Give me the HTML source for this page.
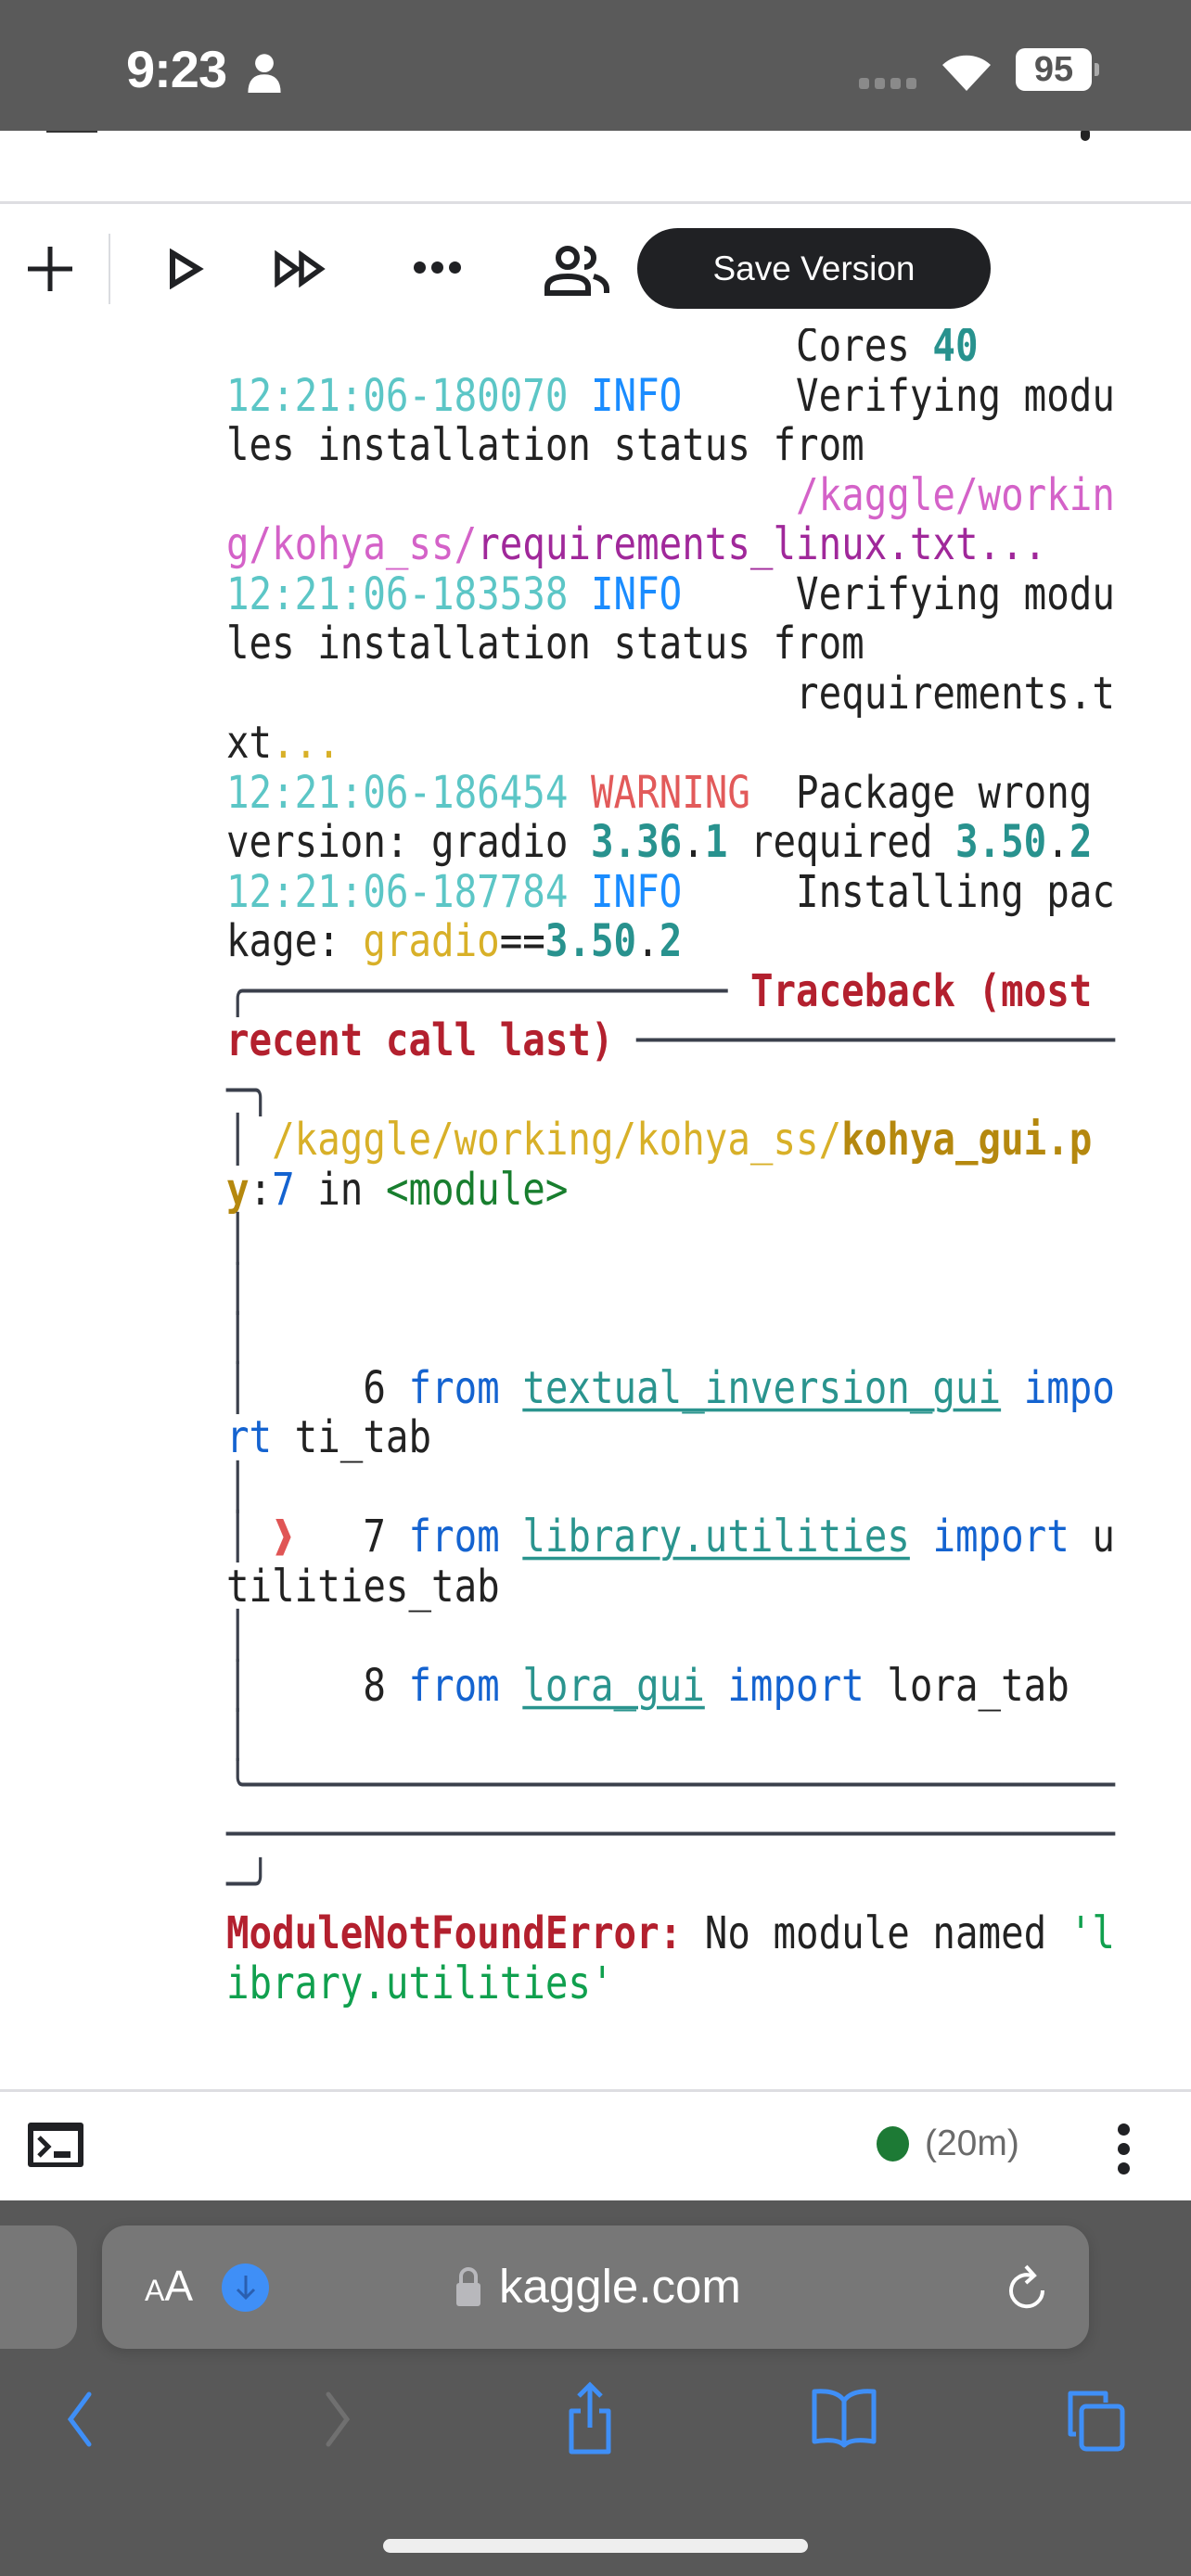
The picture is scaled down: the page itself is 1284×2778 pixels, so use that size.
<!DOCTYPE html>
<html><head><meta charset="utf-8">
<style>
*{margin:0;padding:0;box-sizing:border-box}
html,body{width:1284px;height:2778px;overflow:hidden;background:#fff;position:relative;font-family:"Liberation Sans",sans-serif}
.abs{position:absolute}
#code{position:absolute;left:0;top:354px;width:1284px;height:1900px;overflow:hidden}
#code pre{position:absolute;left:244px;top:-7px;font-family:"DejaVu Sans Mono","Liberation Mono",monospace;font-size:40.8px;line-height:53.5px;color:#222;white-space:pre}
#code pre div{height:53.5px;transform:scaleY(1.18);transform-origin:50% 55%}
.ts{color:#5cc6c6}.in{color:#1a8cff}.wa{color:#e25a5a}
.m1{color:#d462c8}.m2{color:#a0289a}.tb{color:#28928e;font-weight:bold}
.y{color:#d8b028}.rd{color:#b3202e;font-weight:bold}.yb{color:#b5880e;font-weight:bold}
.bl{color:#1463d0}.gr{color:#187e2e}.ln{color:#2a948e;text-decoration:underline;text-decoration-thickness:3px;text-underline-offset:5px}
.bx{color:#3b404c}.ar{color:#e05555}.sg{color:#10a04e}
</style></head><body>

<div class="abs" style="left:50px;top:138px;width:55px;height:5px;background:#333"></div>
<div class="abs" style="left:1165px;top:138px;width:10px;height:14px;border-radius:5px;background:#222"></div>
<div class="abs" style="left:0;top:0;width:1284px;height:141px;background:#5a5a5a"></div>
<div class="abs" style="left:136px;top:42px;color:#fff;font-size:56px;font-weight:bold;letter-spacing:-1px">9:23</div>
<svg class="abs" style="left:263px;top:56px" width="44" height="44" viewBox="0 0 38 40"><circle cx="19" cy="11" r="9" fill="#fff"/><path d="M3 40 Q3 22 19 22 Q35 22 35 40Z" fill="#fff"/></svg>
<div class="abs" style="left:926px;top:84px;width:70px;height:12px;display:flex;gap:6px"><i style="width:11px;height:12px;background:#8a8a8a;border-radius:3px"></i><i style="width:11px;height:12px;background:#8a8a8a;border-radius:3px"></i><i style="width:11px;height:12px;background:#8a8a8a;border-radius:3px"></i><i style="width:11px;height:12px;background:#8a8a8a;border-radius:3px"></i></div>
<svg class="abs" style="left:1012px;top:52px" width="60" height="48" viewBox="0 0 60 48"><path d="M30 46 L4 18 A38 38 0 0 1 56 18Z" fill="#fff"/></svg>
<div class="abs" style="left:1095px;top:52px;width:82px;height:46px;background:#fff;border-radius:10px;color:#555;font-size:38px;font-weight:bold;text-align:center;line-height:46px">95</div>
<div class="abs" style="left:1180px;top:68px;width:5px;height:14px;background:#aaa;border-radius:0 3px 3px 0"></div>

<div class="abs" style="left:0;top:217px;width:1284px;height:3px;background:#dedee2"></div>

<div id="code"><pre><div>                         Cores <span class="tb">40</span></div><div><span class="ts">12:21:06-180070</span> <span class="in">INFO</span>     Verifying modu</div><div>les installation status from</div><div>                         <span class="m1">/kaggle/workin</span></div><div><span class="m1">g/kohya_ss/</span><span class="m2">requirements_linux.txt...</span></div><div><span class="ts">12:21:06-183538</span> <span class="in">INFO</span>     Verifying modu</div><div>les installation status from</div><div>                         requirements.t</div><div>xt<span class="y">...</span></div><div><span class="ts">12:21:06-186454</span> <span class="wa">WARNING</span>  Package wrong</div><div>version: gradio <span class="tb">3.36</span>.<span class="tb">1</span> required <span class="tb">3.50</span>.<span class="tb">2</span></div><div><span class="ts">12:21:06-187784</span> <span class="in">INFO</span>     Installing pac</div><div>kage: <span class="y">gradio</span>==<span class="tb">3.50</span>.<span class="tb">2</span></div><div><span class="bx">╭─────────────────────</span> <span class="rd">Traceback (most</span></div><div><span class="rd">recent call last)</span> <span class="bx">─────────────────────</span></div><div><span class="bx">─╮</span></div><div><span class="bx">│</span> <span class="y">/kaggle/working/kohya_ss/</span><span class="yb">kohya_gui.p</span></div><div><span class="yb">y</span>:<span class="bl">7</span> in <span class="gr">&lt;module&gt;</span></div><div><span class="bx">│</span></div><div><span class="bx">│</span></div><div><span class="bx">│</span></div><div><span class="bx">│</span>     6 <span class="bl">from</span> <span class="ln">textual_inversion_gui</span> <span class="bl">impo</span></div><div><span class="bl">rt</span> ti_tab</div><div><span class="bx">│</span></div><div><span class="bx">│</span> <span class="ar">❱</span>   7 <span class="bl">from</span> <span class="ln">library.utilities</span> <span class="bl">import</span> u</div><div>tilities_tab</div><div><span class="bx">│</span></div><div><span class="bx">│</span>     8 <span class="bl">from</span> <span class="ln">lora_gui</span> <span class="bl">import</span> lora_tab</div><div><span class="bx">│</span></div><div><span class="bx">╰──────────────────────────────────────</span></div><div><span class="bx">───────────────────────────────────────</span></div><div><span class="bx">─╯</span></div><div><span class="rd">ModuleNotFoundError:</span> No module named <span class="sg">'l</span></div><div><span class="sg">ibrary.utilities'</span></div></pre></div>

<div class="abs" style="left:0;top:220px;width:1284px;height:134px;background:#fff"></div>
<svg class="abs" style="left:26px;top:262px" width="56" height="56" viewBox="0 0 56 56"><path d="M28 4V52M4 28H52" stroke="#202124" stroke-width="5"/></svg>
<div class="abs" style="left:117px;top:252px;width:2px;height:76px;background:#dadce0"></div>
<svg class="abs" style="left:180px;top:268px" width="40" height="44" viewBox="0 0 40 44"><path d="M6 5L34 22L6 39Z" fill="none" stroke="#202124" stroke-width="6" stroke-linejoin="miter"/></svg>
<svg class="abs" style="left:294px;top:270px" width="60" height="40" viewBox="0 0 60 40"><path d="M5 5L26 20L5 35ZM31 5L52 20L31 35Z" fill="none" stroke="#202124" stroke-width="5.5"/></svg>
<div class="abs" style="left:446px;top:282px;display:flex;gap:6px"><i style="width:13px;height:13px;border-radius:50%;background:#202124"></i><i style="width:13px;height:13px;border-radius:50%;background:#202124"></i><i style="width:13px;height:13px;border-radius:50%;background:#202124"></i></div>
<svg class="abs" style="left:586px;top:264px" width="76" height="56" viewBox="0 0 76 56"><circle cx="26" cy="14" r="10" fill="none" stroke="#202124" stroke-width="6"/><path d="M4 52V46Q4 34 26 34Q48 34 48 46V52Z" fill="none" stroke="#202124" stroke-width="6"/><path d="M44 4A10 10 0 0 1 44 24" fill="none" stroke="#202124" stroke-width="6"/><path d="M54 34Q68 38 68 48V52" fill="none" stroke="#202124" stroke-width="6"/></svg>
<div class="abs" style="left:687px;top:246px;width:381px;height:87px;border-radius:44px;background:#202124;color:#fff;font-size:37px;line-height:87px;text-align:center">Save Version</div>

<div class="abs" style="left:0;top:2253px;width:1284px;height:3px;background:#dedee2"></div>
<div class="abs" style="left:0;top:2256px;width:1284px;height:117px;background:#fff"></div>
<svg class="abs" style="left:28px;top:2287px" width="64" height="52" viewBox="0 0 64 52"><rect x="2" y="2" width="60" height="48" rx="3" fill="#202124"/><rect x="8" y="11" width="48" height="34" fill="#fff"/><path d="M14 18L24 28L14 38" fill="none" stroke="#202124" stroke-width="5"/><rect x="30" y="33" width="18" height="7" fill="#202124"/></svg>
<div class="abs" style="left:945px;top:2293px;width:35px;height:38px;border-radius:50%;background:#1d7a35"></div>
<div class="abs" style="left:997px;top:2290px;color:#6a6a6a;font-size:39px">(20m)</div>
<div class="abs" style="left:1205px;top:2290px;display:flex;flex-direction:column;gap:8px"><i style="width:13px;height:13px;border-radius:50%;background:#202124"></i><i style="width:13px;height:13px;border-radius:50%;background:#202124"></i><i style="width:13px;height:13px;border-radius:50%;background:#202124"></i></div>

<div class="abs" style="left:0;top:2373px;width:1284px;height:405px;background:#585858"></div>
<div class="abs" style="left:-40px;top:2400px;width:123px;height:133px;border-radius:26px;background:#777"></div>
<div class="abs" style="left:110px;top:2400px;width:1064px;height:133px;border-radius:26px;background:#777;box-shadow:0 4px 14px rgba(0,0,0,.15)"></div>
<div class="abs" style="left:156px;top:2440px;color:#fff;font-size:46px;line-height:50px"><span style="font-size:32px">A</span>A</div>
<div class="abs" style="left:239px;top:2441px;width:51px;height:52px;border-radius:50%;background:#3f8ff7"></div>
<svg class="abs" style="left:249px;top:2450px" width="32" height="34" viewBox="0 0 32 34"><path d="M16 4V28M7 19L16 28L25 19" fill="none" stroke="#2a5fb0" stroke-width="3"/></svg>
<svg class="abs" style="left:490px;top:2443px" width="30" height="46" viewBox="0 0 30 46"><path d="M7 20V12A8 8 0 0 1 23 12V20" fill="none" stroke="#b8b8bc" stroke-width="4"/><rect x="2" y="19" width="26" height="25" rx="3" fill="#b8b8bc"/></svg>
<div class="abs" style="left:538px;top:2436px;color:#fff;font-size:51px;line-height:60px">kaggle.com</div>
<svg class="abs" style="left:1086px;top:2440px" width="46" height="56" viewBox="0 0 46 56"><path d="M26 14A17 17 0 1 0 38 30" fill="none" stroke="#fff" stroke-width="4"/><path d="M20 4L29 14L20 22" fill="none" stroke="#fff" stroke-width="4"/></svg>
<svg class="abs" style="left:66px;top:2578px" width="40" height="62" viewBox="0 0 40 62"><path d="M30 4L10 31L30 58" fill="none" stroke="#3f8ff7" stroke-width="5" stroke-linecap="round"/></svg>
<svg class="abs" style="left:344px;top:2578px" width="40" height="62" viewBox="0 0 40 62"><path d="M10 4L30 31L10 58" fill="none" stroke="#707070" stroke-width="5" stroke-linecap="round"/></svg>
<svg class="abs" style="left:606px;top:2568px" width="60" height="80" viewBox="0 0 60 80"><path d="M30 4V50M18 16L30 4L42 16" fill="none" stroke="#3f8ff7" stroke-width="5"/><path d="M20 32H10V76H50V32H40" fill="none" stroke="#3f8ff7" stroke-width="5" stroke-linejoin="round"/></svg>
<svg class="abs" style="left:872px;top:2575px" width="76" height="66" viewBox="0 0 76 66"><path d="M38 14Q30 2 6 4V58Q30 54 38 62Q46 54 70 58V4Q46 2 38 14V60" fill="none" stroke="#3f8ff7" stroke-width="5" stroke-linejoin="round"/></svg>
<svg class="abs" style="left:1146px;top:2575px" width="72" height="72" viewBox="0 0 72 72"><path d="M14 50H8V6H46V16" fill="none" stroke="#3f8ff7" stroke-width="5" stroke-linejoin="round"/><rect x="20" y="20" width="44" height="46" rx="5" fill="none" stroke="#3f8ff7" stroke-width="5"/></svg>
<div class="abs" style="left:413px;top:2738px;width:458px;height:15px;border-radius:8px;background:#eee"></div>
</body></html>
